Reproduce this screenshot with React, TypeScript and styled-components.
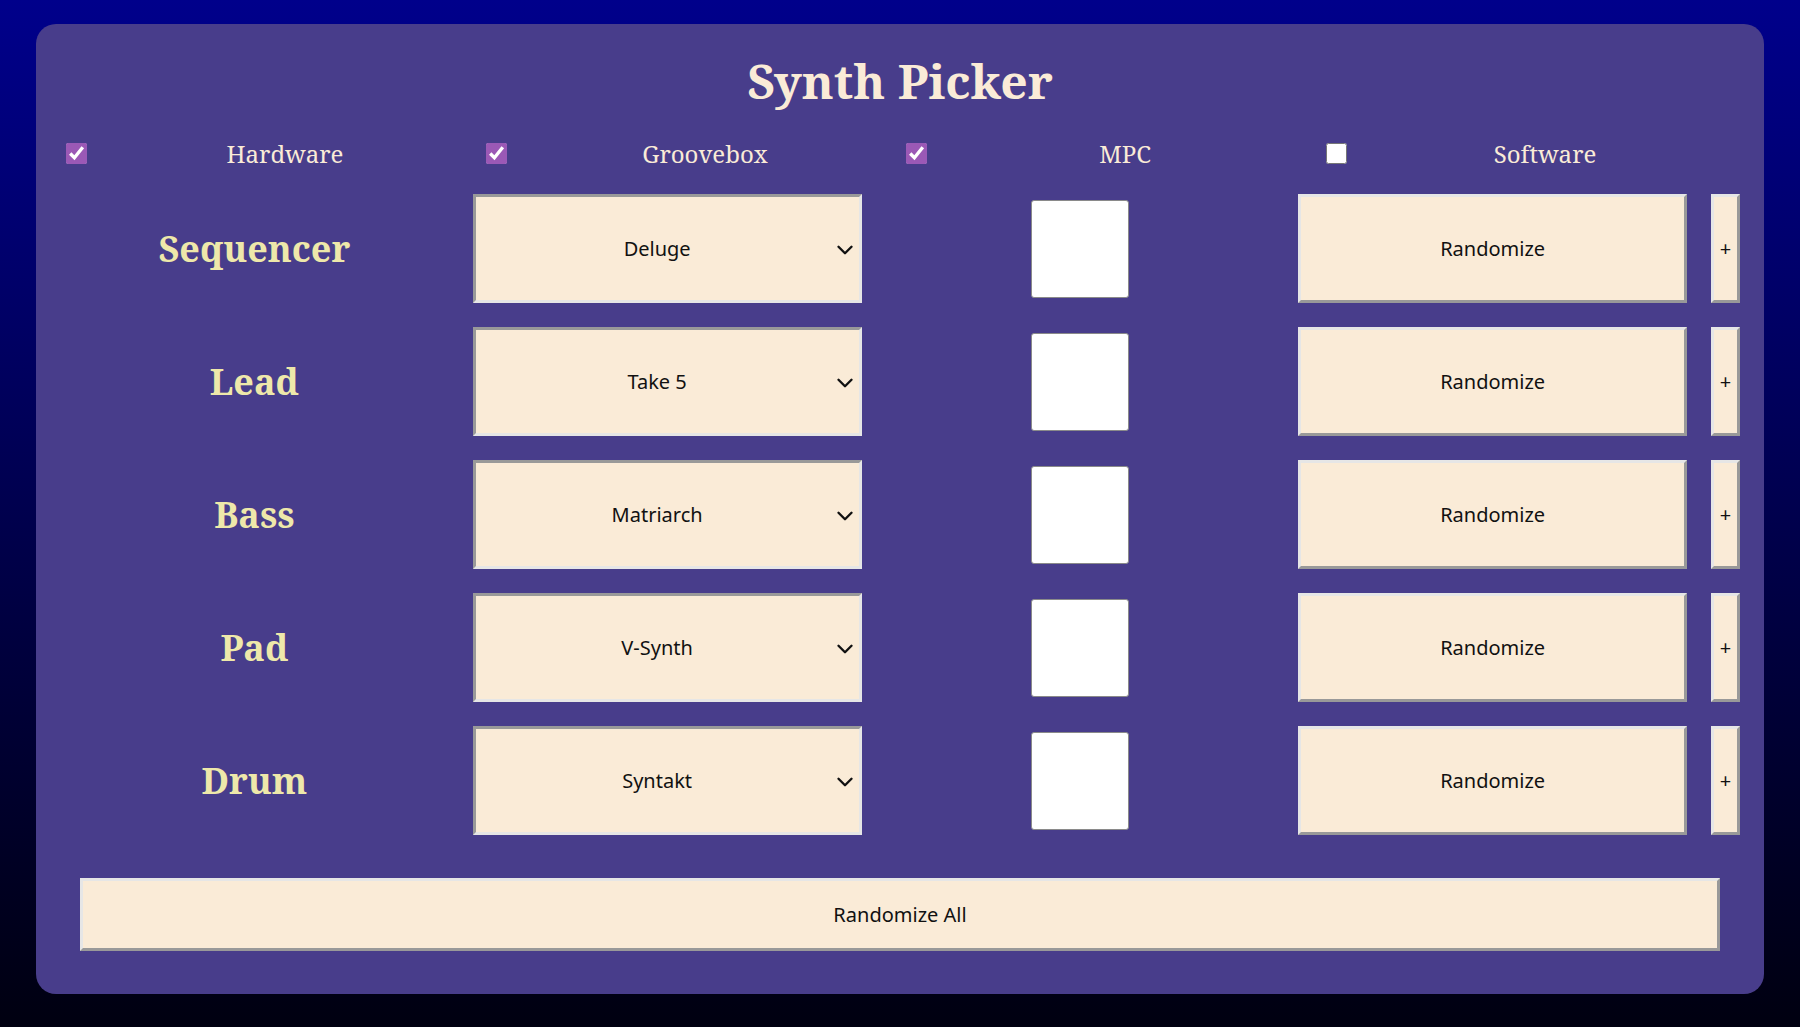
import styled, { createGlobalStyle } from "styled-components";
import { ChevronDown } from "lucide-react";

const GlobalStyle = createGlobalStyle`
  html, body {
    margin: 0;
    padding: 0;
  }
  body {
    min-height: 100vh;
    background: linear-gradient(to bottom, #00008b, #000010);
    font-family: "Noto Serif", "DejaVu Serif", serif;
  }
  #root {
    padding: 24px 0 33px;
  }
`;

const Panel = styled.div`
  width: 96%;
  margin: 0 auto;
  box-sizing: border-box;
  padding: 24px;
  background: #483d8b;
  border-radius: 20px;
  display: flex;
  flex-direction: column;
  gap: 24px;
`;

const Title = styled.h1`
  margin: 0;
  text-align: center;
  font-size: 48px;
  font-weight: bold;
  color: #faebd7;
`;

const FilterBar = styled.div`
  display: grid;
  grid-template-columns: repeat(4, 1fr);
`;

const Filter = styled.label`
  display: flex;
  align-items: center;
  font-size: 24px;
  color: #faebd7;
`;

const Check = styled.input.attrs({ type: "checkbox" })`
  width: 21px;
  height: 21px;
  margin: 0 3px 0 6px;
  accent-color: #9b59b6;
`;

const FilterName = styled.span`
  flex: 1;
  text-align: center;
`;

const Row = styled.div`
  display: grid;
  grid-template-columns: repeat(4, 1fr) 29px;
  column-gap: 24px;
  height: 109px;
  align-items: center;
`;

const RoleName = styled.h2`
  margin: 0;
  text-align: center;
  font-size: 36px;
  font-weight: bold;
  color: #eee8aa;
`;

const control = `
  height: 100%;
  box-sizing: border-box;
  background: #faebd7;
  color: #111;
  font-family: "Noto Sans", "Open Sans", sans-serif;
  font-size: 20px;
  border-width: 3px;
  border-style: solid;
`;

const SelectWrap = styled.div`
  position: relative;
  height: 100%;

  svg {
    position: absolute;
    right: 4px;
    top: 50%;
    margin-top: -12px;
    color: #111;
    pointer-events: none;
  }
`;

const SynthSelect = styled.select`
  ${control}
  width: 100%;
  appearance: none;
  padding: 0 20px 0 0;
  text-align: center;
  border-color: #999 #e6e6e6 #e6e6e6 #999;
  border-radius: 0;
`;

const Preview = styled.div`
  justify-self: center;
  width: 98px;
  height: 98px;
  box-sizing: border-box;
  background: #fff;
  border: 1px solid #8a8a8a;
  border-radius: 3px;
`;

const Button = styled.button`
  ${control}
  width: 100%;
  padding: 0;
  border-color: #e6e6e6 #999 #999 #e6e6e6;
  cursor: pointer;
`;

const WideButton = styled(Button)`
  height: 73px;
  width: auto;
  margin: 19px 20px;
`;

const filters = [
  { name: "Hardware", on: true },
  { name: "Groovebox", on: true },
  { name: "MPC", on: true },
  { name: "Software", on: false },
];

const roles = [
  { name: "Sequencer", synth: "Deluge" },
  { name: "Lead", synth: "Take 5" },
  { name: "Bass", synth: "Matriarch" },
  { name: "Pad", synth: "V-Synth" },
  { name: "Drum", synth: "Syntakt" },
];

export default function App() {
  return (
    <>
      <GlobalStyle />
      <Panel>
        <Title>Synth Picker</Title>
        <FilterBar>
          {filters.map((f) => (
            <Filter key={f.name}>
              <Check defaultChecked={f.on} />
              <FilterName>{f.name}</FilterName>
            </Filter>
          ))}
        </FilterBar>
        {roles.map((r) => (
          <Row key={r.name}>
            <RoleName>{r.name}</RoleName>
            <SelectWrap>
              <SynthSelect defaultValue={r.synth}>
                <option>{r.synth}</option>
              </SynthSelect>
              <ChevronDown size={26} strokeWidth={2.2} />
            </SelectWrap>
            <Preview />
            <Button>Randomize</Button>
            <Button>+</Button>
          </Row>
        ))}
        <WideButton>Randomize All</WideButton>
      </Panel>
    </>
  );
}
